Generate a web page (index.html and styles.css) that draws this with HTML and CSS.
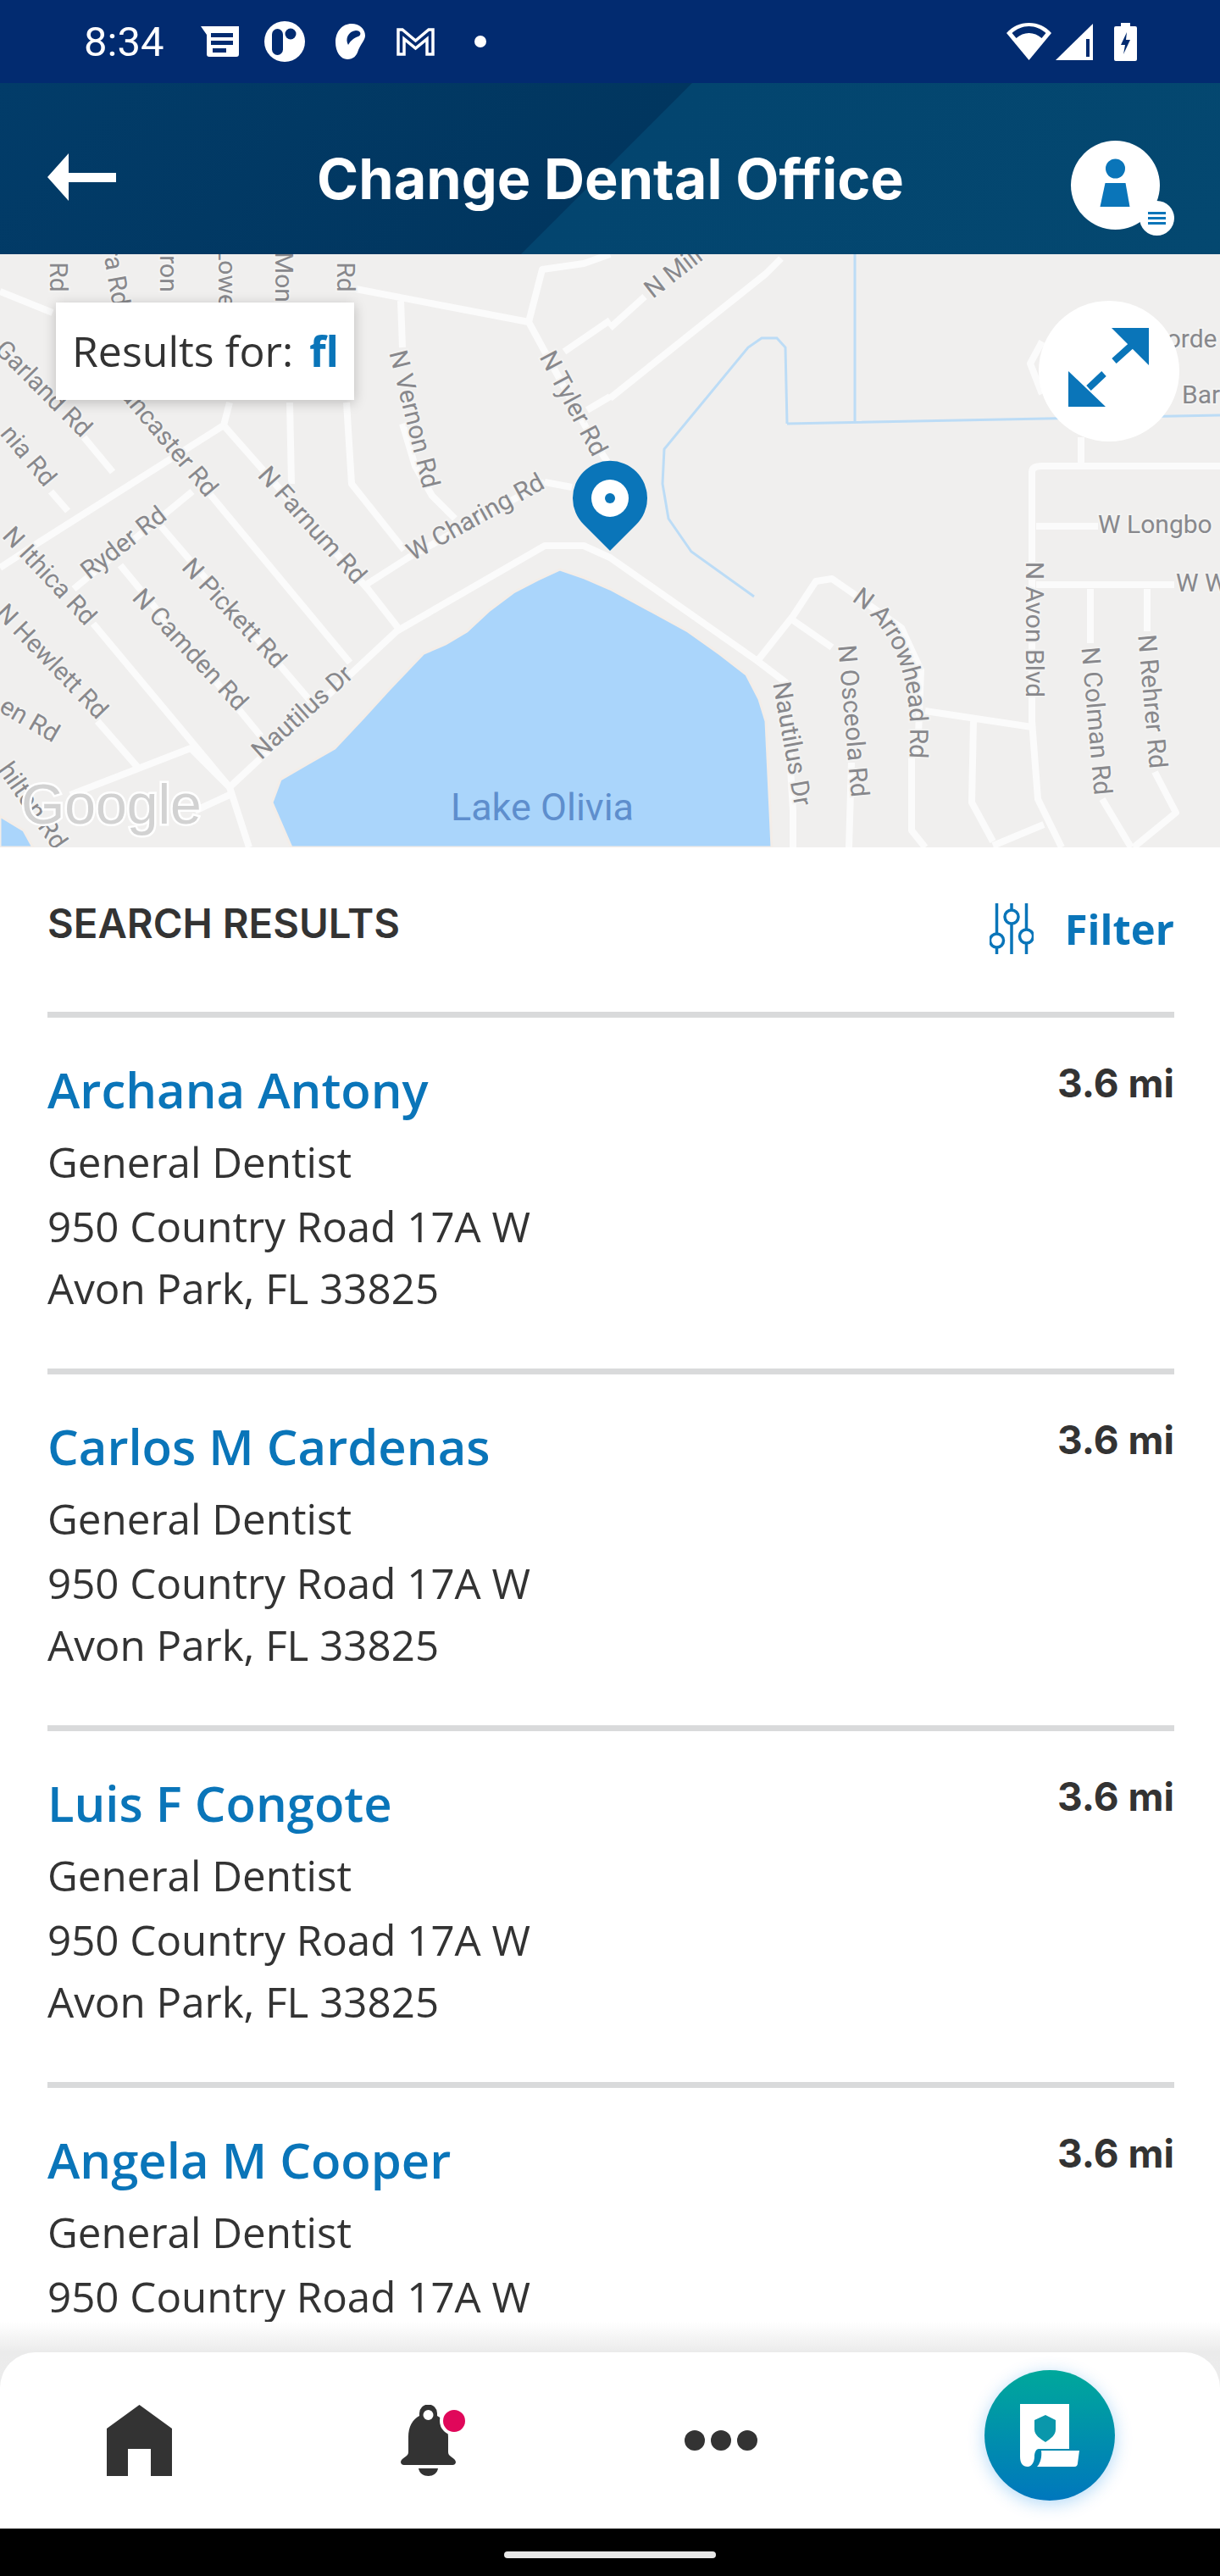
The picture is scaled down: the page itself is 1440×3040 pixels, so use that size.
FILE: index.html
```html
<!DOCTYPE html>
<html>
<head>
<meta charset="utf-8"/>
<title>Change Dental Office</title>
<link rel="stylesheet" href="styles.css">
</head>
<body>
<div class="screen">

  <!-- android status bar -->
  <div class="statusbar">
    <span class="clock">8:34</span>
    <svg class="st-docs" width="45" height="36" viewBox="0 0 45 36"><path d="M0 0H45V33a3 3 0 0 1-3 3H10a3 3 0 0 1-3-3V10Z" fill="#fff"/><path d="M12 8H38V13H12ZM12 17H38V22H12ZM14 26H30V31H14Z" fill="#022b70"/></svg>
    <svg class="st-circle" width="48" height="48" viewBox="0 0 48 48"><circle cx="24" cy="24" r="24" fill="#fff"/><rect x="9" y="9" width="13" height="31" rx="6.5" fill="#022b70"/><circle cx="31" cy="15" r="6.5" fill="#022b70"/></svg>
    <svg class="st-drop" width="35" height="42" viewBox="0 0 35 42"><path d="M19 0C28 0 35 6 35 14C35 19 30 24 27 31C25 38 21 42 14 42C6 42 0 33 0 22C0 9 8 0 19 0Z" fill="#fff"/><path d="M15 25C11 18 15 9 24 8C30 8 31 13 27 15C21 17 18 20 15 25Z" fill="#022b70"/></svg>
    <svg class="st-mail" width="45" height="34" viewBox="0 0 45 34"><path d="M2 32V3H7L22.500 16L38 3H43V32H36V14L22.500 25L9 14V32Z" fill="none" stroke="#fff" stroke-width="3.500"/></svg>
    <span class="st-dot"></span>
    <span class="st-spacer"></span>
    <svg width="53" height="44" viewBox="0 0 53 44"><path d="M26.500 44L0 12C7 4 16 0 26.500 0S46 4 53 12Z" fill="#fff"/><path d="M6.500 12C12 7 19 4 26.500 4S41 7 46.500 12L41.500 18C37 14 32 12 26.500 12S16 14 11.500 18Z" fill="#022b70"/></svg>
    <svg class="st-signal" width="44" height="43" viewBox="0 0 44 43"><path d="M44 0V43H0Z" fill="#fff"/><path d="M36 18H40V39H36Z" fill="#022b70"/></svg>
    <svg class="st-batt" width="27" height="45" viewBox="0 0 27 45"><path d="M8 0H19V4H25a2 2 0 0 1 2 2V43a2 2 0 0 1-2 2H2a2 2 0 0 1-2-2V6a2 2 0 0 1 2-2H8Z" fill="#fff"/><path d="M15 11L8 26H13L11 37L19 20H14Z" fill="#022b70"/></svg>
  </div>

  <div class="appbar">
    <svg class="back" width="81" height="56" viewBox="0 0 81 56"><path d="M25 0V23H81V34H25V56L0 28Z" fill="#fff"/></svg>
    <h1 class="title">Change Dental Office</h1>
    <div class="avatar">
      <svg width="105" height="105" viewBox="0 0 105 105"><circle cx="52.500" cy="33" r="11.500"/><path d="M40.500 50H64.500L69.500 78H34.500Z"/></svg>
      <span class="menu-badge"><i></i><i></i><i></i></span>
    </div>
  </div>

  <div class="map">
    <svg class="map-canvas" width="1440" height="700" viewBox="0 0 1440 700">
      <rect width="1440" height="700" fill="#f0efee"/>
      <g class="water">
        <path d="M321 647L331 620L362 602L395 583L428 548L459 514L500 471L526 460L551 445L578 420L606 399L635 384L661 372L690 382L720 395L770 422L812 445L850 472L881 496L896 525L904 551L911 700H344Z"/>
        <path d="M0 663L28 680L39 700H0Z"/>
      </g>
      <g class="stream">
        <path d="M1009 0V197M929 200L1440 190M929 200L927 110L917 99H899L883 110L784 230L782 271L789 312L816 351L890 404"/>
      </g>
      <g class="roads">
        <path d="M0 44L62 69M420 41L624 80L640 18L689 11L720 0M624 80L698 216L720 250M666 115L720 78M693 184L720 168"/>
        <path d="M473 55L475 110M475 200L490 250L510 285L537 312M643 269L675 275M432 390L482 358L643 269"/>
        <path d="M342 175L344 271M409 175L415 271L477 349M271 175L264 202M264 202L46 340L0 370M264 202L434 395L470 441"/>
        <path d="M241 275L413 482M87 395L227 280M190 321L367 528M142 367L308 569M110 436L271 629L294 700M115 551L163 606M99 216L133 257M60 280L80 303"/>
        <path d="M271 629L468 445L643 344L689 344L720 358L894 480L927 505L936 657V700M83 638L225 583L271 629M230 657L271 638"/>
        <path d="M720 87L761 50M720 170L904 23L922 5"/>
        <path d="M894 480L936 427L963 386L982 383L1005 399L1064 441L1087 491L1083 592M1076 592V680L1092 700M936 432L982 464M1005 600L1002 700"/>
        <path d="M1218 257V551L1225 643L1253 700M1218 257Q1218 250 1230 250H1440M1276 216V250M1223 321H1296M1223 390H1386M1287 395V459M1301 643L1335 700M1354 395V445M1363 611L1388 659L1338 700"/>
        <path d="M1092 539L1218 558M1149 551L1147 647L1172 693M1172 698L1232 673M1230 103L1216 129L1230 165"/>
      </g>
      <path id="arrowhead-road" class="label-guide" d="M1005 400Q1092 450 1081 600"/>
      <g class="labels">
        <text transform="translate(67 27) rotate(90)">Rd</text>
        <text transform="translate(135 27) rotate(80)">ra Rd</text>
        <text transform="translate(197 23) rotate(90)">ron</text>
        <text transform="translate(266 27) rotate(90)">Lowe</text>
        <text transform="translate(333 27) rotate(90)">Mon</text>
        <text transform="translate(406 27) rotate(90)">Rd</text>
        <text transform="translate(487 195) rotate(76)">N Vernon Rd</text>
        <text transform="translate(675 177) rotate(62)">N Tyler Rd</text>
        <text transform="translate(562 312) rotate(-29)">W Charing Rd</text>
        <text transform="translate(367 321) rotate(48)">N Farnum Rd</text>
        <text transform="translate(50 160) rotate(45)">Garland Rd</text>
        <text transform="translate(193 216) rotate(50)">Lancaster Rd</text>
        <text transform="translate(32 239) rotate(50)">nia Rd</text>
        <text transform="translate(147 342) rotate(-38)">Ryder Rd</text>
        <text transform="translate(275 425) rotate(47)">N Pickett Rd</text>
        <text transform="translate(223 468) rotate(47)">N Camden Rd</text>
        <text transform="translate(57 381) rotate(47)">N Ithica Rd</text>
        <text transform="translate(60 482) rotate(46)">N Hewlett Rd</text>
        <text transform="translate(34 551) rotate(30)">en Rd</text>
        <text transform="translate(37 652) rotate(55)">hilton Rd</text>
        <text transform="translate(358 542) rotate(-42)">Nautilus Dr</text>
        <text transform="translate(796 23) rotate(-38)">N Mill</text>
        <text><textPath href="#arrowhead-road" startOffset="50%">N Arrowhead Rd</textPath></text>
        <text transform="translate(1005 551) rotate(85)">N Osceola Rd</text>
        <text transform="translate(933 578) rotate(80)">Nautilus Dr</text>
        <text transform="translate(1219 443) rotate(90)">N Avon Blvd</text>
        <text transform="translate(1292 551) rotate(85)">N Colman Rd</text>
        <text transform="translate(1358 528) rotate(85)">N Rehrer Rd</text>
        <text class="label-left" x="1296" y="321">W Longbo</text>
        <text class="label-left" x="1388" y="390">W W</text>
        <text class="label-left" x="1358" y="102">Borde</text>
        <text class="label-left" x="1395" y="168">Bark</text>
      </g>
      <text class="lake" x="640" y="668" text-anchor="middle">Lake Olivia</text>
      <text class="google" x="25" y="672">Google</text>
      <g class="pin">
        <path d="M720 350L689 319A44 44 0 1 1 751 319Z"/>
        <circle cx="720" cy="288" r="22" fill="#fff"/>
        <circle cx="720" cy="288" r="6"/>
      </g>
    </svg>
    <div class="results-for"><span>Results for:</span><b>fl</b></div>
    <div class="expand">
      <svg width="166" height="166" viewBox="-1 -2 166 166"><path d="M85 30H129V74ZM34 81L78 123H34Z"/><path d="M88 69L108 51M58 101L76 84" fill="none" stroke="#0a75b9" stroke-width="8"/></svg>
    </div>
  </div>

  <div class="content">
    <div class="results-head">
      <h2>SEARCH RESULTS</h2>
      <div class="filter">
        <svg width="52" height="60" viewBox="0 0 52 60"><g fill="none" stroke="#0a75b9" stroke-width="3.500"><path d="M8.500 0V35M8.500 53V60M26 0V7M26 25V60M43.500 0V30M43.500 48V60"/><circle cx="8.500" cy="44" r="8"/><circle cx="26" cy="16" r="8"/><circle cx="43.500" cy="39" r="8"/></g></svg>
        <span>Filter</span>
      </div>
    </div>

    <div class="result">
      <div class="result-top"><a class="name">Archana Antony</a><span class="dist">3.6 mi</span></div>
      <p class="spec">General Dentist</p>
      <p class="addr">950 Country Road 17A W<br>Avon Park, FL 33825</p>
    </div>
    <div class="result">
      <div class="result-top"><a class="name">Carlos M Cardenas</a><span class="dist">3.6 mi</span></div>
      <p class="spec">General Dentist</p>
      <p class="addr">950 Country Road 17A W<br>Avon Park, FL 33825</p>
    </div>
    <div class="result">
      <div class="result-top"><a class="name">Luis F Congote</a><span class="dist">3.6 mi</span></div>
      <p class="spec">General Dentist</p>
      <p class="addr">950 Country Road 17A W<br>Avon Park, FL 33825</p>
    </div>
    <div class="result">
      <div class="result-top"><a class="name">Angela M Cooper</a><span class="dist">3.6 mi</span></div>
      <p class="spec">General Dentist</p>
      <p class="addr">950 Country Road 17A W</p>
    </div>
  </div>

  <div class="tabbar">
    <svg class="tab-home" width="77" height="84" viewBox="0 0 77 84"><path d="M38.500 0L77 28V84H52V52H25V84H0V28Z" fill="#333"/></svg>
    <div class="tab-bell">
      <svg width="65" height="84" viewBox="0 0 65 84"><path d="M22 10a10.500 10.500 0 0 1 21 0V13C51 17 56 26 56 38V56C56 62 65 62 65 68A4 4 0 0 1 61 71H4A4 4 0 0 1 0 68C0 62 9 62 9 56V38C9 26 14 17 22 13Z" fill="#333"/><circle cx="32.500" cy="12" r="6" fill="#fff"/><path d="M21 75H44C43 81 38 84 32.500 84S22 81 21 75Z" fill="#333"/></svg>
      <span class="bell-dot"></span>
    </div>
    <div class="tab-more"><i></i><i></i><i></i></div>
    <div class="fab">
      <svg width="70" height="74" viewBox="0 0 70 74"><path d="M0 0H58V53H22C19 53 17 57 17 62C17 68 14 74 9 74C3 74 0 70 0 62Z" fill="#fff"/><path d="M30 13L42 19V30C42 37 36 41 30 45C24 41 17 37 17 30V19Z" fill="#0a97ab"/><path d="M25 55H70L68 70C68 72 67 74 64 74H20C24 70 26 62 25 55Z" fill="#fff"/></svg>
    </div>
  </div>

  <div class="navbar"><span class="home-pill"></span></div>
</div>
</body>
</html>
```
FILE: styles.css
```css
* {
  box-sizing: border-box;
}

html, body {
  margin: 0;
  padding: 0;
  background: #fff;
}

.screen {
  width: 1440px;
  height: 3040px;
  display: flex;
  flex-direction: column;
  overflow: hidden;
  font-family: "Open Sans", sans-serif;
  color: #333;
}

/* status bar */
.statusbar {
  height: 98px;
  flex: none;
  display: flex;
  align-items: center;
  padding: 0 98px 0 99px;
  background: #022b70;
}

.clock {
  font-family: Roboto, sans-serif;
  font-size: 49px;
  color: #fff;
  width: 138px;
}

.st-circle {
  margin-left: 30px;
}

.st-drop {
  margin-left: 36px;
}

.st-mail {
  margin-left: 37px;
}

.st-dot {
  width: 14px;
  height: 14px;
  margin-left: 47px;
  border-radius: 50%;
  background: #fff;
}

.st-spacer {
  flex: 1;
}

.st-signal {
  margin-left: 5px;
}

.st-batt {
  margin-left: 25px;
}

/* app bar */
.appbar {
  height: 202px;
  flex: none;
  display: flex;
  align-items: center;
  position: relative;
  padding: 0 54px 0 56px;
  background: linear-gradient(135deg, #023c69 0, #01365f 49.7%, #03456f 49.8%, #044870 100%);
}

.back {
  flex: none;
  margin-top: 20px;
}

.title {
  flex: 1;
  margin: 0 0 -24px 0;
  padding-left: 40px;
  text-align: center;
  font-family: Inter, sans-serif;
  font-size: 66.500px;
  font-weight: 700;
  color: #fff;
}

.avatar {
  flex: none;
  width: 105px;
  height: 105px;
  margin: 38px 17px 0 0;
  position: relative;
  border-radius: 50%;
  background: #fff;
}

.avatar svg {
  display: block;
  fill: #0a75b9;
}

.menu-badge {
  position: absolute;
  right: -17px;
  bottom: -7px;
  width: 41px;
  height: 41px;
  display: flex;
  flex-direction: column;
  justify-content: center;
  align-items: center;
  gap: 3px;
  border-radius: 50%;
  background: #fff;
}

.menu-badge i {
  width: 21px;
  height: 3px;
  background: #0a75b9;
}

/* map */
.map {
  height: 700px;
  flex: none;
  position: relative;
  overflow: hidden;
}

.map-canvas {
  display: block;
}

.water {
  fill: #aad5fb;
  stroke: #f3ede8;
  stroke-width: 3;
}

.stream {
  fill: none;
  stroke: #bcdcf6;
  stroke-width: 3;
}

.roads {
  fill: none;
  stroke: #fbfbfb;
  stroke-width: 8;
  stroke-linejoin: round;
}

.label-guide {
  fill: none;
  stroke: none;
}

.labels {
  font-family: Roboto, sans-serif;
  font-size: 30px;
  fill: #88888c;
  stroke: #f3f3f2;
  stroke-width: 4px;
  paint-order: stroke;
  text-anchor: middle;
  dominant-baseline: middle;
}

.labels .label-left {
  text-anchor: start;
}

.lake {
  font-family: Roboto, sans-serif;
  font-size: 45px;
  fill: #5e8ecd;
}

.google {
  font-family: "Liberation Sans", sans-serif;
  font-size: 66px;
  fill: #d2d2d2;
  stroke: #fff;
  stroke-width: 5px;
  paint-order: stroke;
}

.pin {
  fill: #0a75b9;
}

.results-for {
  position: absolute;
  left: 66px;
  top: 57px;
  width: 352px;
  height: 115px;
  padding: 0 0 2px 19px;
  display: flex;
  align-items: center;
  gap: 19px;
  font-size: 50px;
  background: #fff;
  box-shadow: 0 3px 14px rgba(0, 0, 0, .22);
}

.results-for b {
  color: #0a75b9;
}

.expand {
  position: absolute;
  left: 1226px;
  top: 55px;
  width: 166px;
  height: 166px;
  border-radius: 50%;
  background: #fff;
}

.expand svg {
  display: block;
  fill: #0a75b9;
}

/* list */
.content {
  flex: 1;
  min-height: 0;
  overflow: hidden;
  padding: 0 54px 0 56px;
}

.results-head {
  height: 194px;
  display: flex;
  justify-content: space-between;
  align-items: flex-start;
}

.results-head h2 {
  margin: 62px 0 0 0;
  font-family: Inter, sans-serif;
  font-size: 47.300px;
  line-height: 56px;
  font-weight: 600;
}

.filter {
  display: flex;
  align-items: center;
  gap: 37px;
  margin-top: 66px;
  color: #0a75b9;
  font-size: 49px;
  font-weight: 700;
}

.filter span {
  line-height: 60px;
}

.result {
  height: 421px;
  padding-top: 53px;
  border-top: 7px solid #d9dadb;
}

.result-top {
  display: flex;
  justify-content: space-between;
  align-items: flex-start;
}

.name {
  font-size: 58px;
  line-height: 64px;
  font-weight: 600;
  color: #0a75b9;
}

.dist {
  margin-top: -4px;
  font-family: Inter, sans-serif;
  font-size: 46px;
  line-height: 56px;
  font-weight: 700;
}

.spec, .addr {
  margin: 0;
  font-size: 49.300px;
}

.spec {
  margin-top: 15px;
  line-height: 76px;
}

.addr {
  margin-top: 1px;
  line-height: 73px;
}

/* bottom tabs */
.tabbar {
  height: 208px;
  flex: none;
  position: relative;
  z-index: 1;
  display: flex;
  align-items: center;
  border-radius: 42px 42px 0 0;
  background: #fff;
}

/* soft fade the list disappears into, also shows in the rounded corners */
.tabbar::before {
  content: "";
  position: absolute;
  z-index: -1;
  left: 0;
  right: 0;
  top: -36px;
  height: 78px;
  background: linear-gradient(180deg, #fff 0, #ebebeb 36px, #ececec 100%);
}

.tabbar::after {
  content: "";
  position: absolute;
  z-index: -1;
  left: 0;
  right: 0;
  top: 0;
  bottom: 0;
  border-radius: 42px 42px 0 0;
  background: #fff;
}

.tab-home {
  position: absolute;
  left: 126px;
  top: 62px;
}

.tab-bell {
  position: absolute;
  left: 473px;
  top: 62px;
}

.tab-bell svg {
  display: block;
}

.bell-dot {
  position: absolute;
  left: 46px;
  top: 2px;
  width: 34px;
  height: 34px;
  border: 4px solid #fff;
  border-radius: 50%;
  background: #e0075a;
}

.tab-more {
  position: absolute;
  left: 808px;
  top: 92px;
  display: flex;
  gap: 7px;
}

.tab-more i {
  width: 24px;
  height: 24px;
  border-radius: 50%;
  background: #333;
}

.fab {
  position: absolute;
  left: 1162px;
  top: 21px;
  width: 154px;
  height: 154px;
  display: flex;
  align-items: center;
  justify-content: center;
  border-radius: 50%;
  background: linear-gradient(180deg, #00a89b, #0077bd);
  box-shadow: 0 4px 20px rgba(0, 130, 230, .3);
}

.navbar {
  height: 56px;
  flex: none;
  position: relative;
  display: flex;
  justify-content: center;
  padding-top: 27px;
  background: #000;
}

.home-pill {
  width: 250px;
  height: 8px;
  border-radius: 4px;
  background: #e8e8e8;
}
```
